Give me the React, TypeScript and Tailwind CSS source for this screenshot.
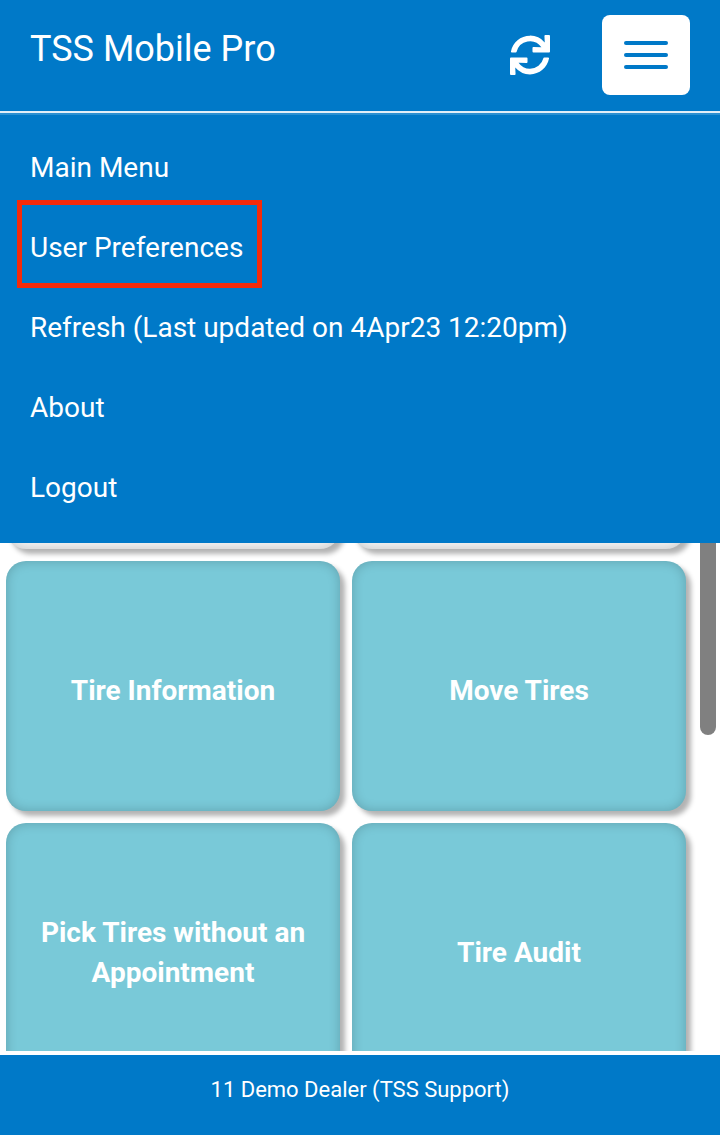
import React from 'react';
import { FaSync } from 'react-icons/fa';

const menuItems = [
  'Main Menu',
  'User Preferences',
  'Refresh (Last updated on 4Apr23 12:20pm)',
  'About',
  'Logout',
];

const Card: React.FC<{ label?: React.ReactNode; blank?: boolean }> = ({ label, blank }) => (
  <div
    className={`flex h-[250px] items-center justify-center rounded-[20px] px-6 pt-[10px] text-center text-[28px] leading-[40px] font-bold text-white shadow-[inset_0_0_12px_rgba(0,0,0,0.2),5px_5px_5px_rgba(0,0,0,0.3)] ${
      blank ? 'bg-[#f4f4f4]' : 'bg-[#79c9d8]'
    }`}
  >
    {label}
  </div>
);

export default function App() {
  return (
    <div className="relative flex h-[1135px] w-[720px] flex-col overflow-hidden bg-white font-['Roboto',sans-serif]">
      <header className="flex h-[111px] items-center justify-between bg-[#0079c8] px-[30px] pb-px">
        <h1 className="mb-[12px] text-[36px] leading-[40px] font-normal text-white">TSS Mobile Pro</h1>
        <div className="flex items-center gap-[52px]">
          <FaSync className="h-10 w-10 text-white" />
          <button className="flex h-[80px] w-[88px] flex-col items-center justify-center gap-[8px] rounded-lg bg-white">
            <span className="h-1 w-11 rounded-full bg-[#0079c8]" />
            <span className="h-1 w-11 rounded-full bg-[#0079c8]" />
            <span className="h-1 w-11 rounded-full bg-[#0079c8]" />
          </button>
        </div>
      </header>
      <div className="h-[2px] bg-[#e3eff8]" />
      <div className="h-[2px] bg-[#2b90d2]" />
      <nav className="relative z-10 flex h-[428px] flex-col bg-[#0079c8] pt-[13px] pl-[30px]">
        {menuItems.map((item) => (
          <div key={item} className="relative flex h-[80px] items-center text-[28px] text-white">
            {item}
            {item === 'User Preferences' && (
              <span className="absolute top-[-8px] left-[-13px] h-[88px] w-[245px] border-[5px] border-[#f52a0a]" />
            )}
          </div>
        ))}
      </nav>
      <main className="relative flex-1 overflow-hidden">
        <div className="mt-[-244px] grid w-[686px] grid-cols-2 gap-3 pl-1.5">
          <Card blank />
          <Card blank />
          <Card label="Tire Information" />
          <Card label="Move Tires" />
          <Card label="Pick Tires without an Appointment" />
          <Card label="Tire Audit" />
        </div>
        <div className="absolute top-0 right-1 h-[192px] w-4 rounded-b-lg bg-[#808080]" />
      </main>
      <footer className="mt-1 flex h-20 items-center justify-center bg-[#0079c8] pb-3 text-[22px] text-white">
        11 Demo Dealer (TSS Support)
      </footer>
    </div>
  );
}
